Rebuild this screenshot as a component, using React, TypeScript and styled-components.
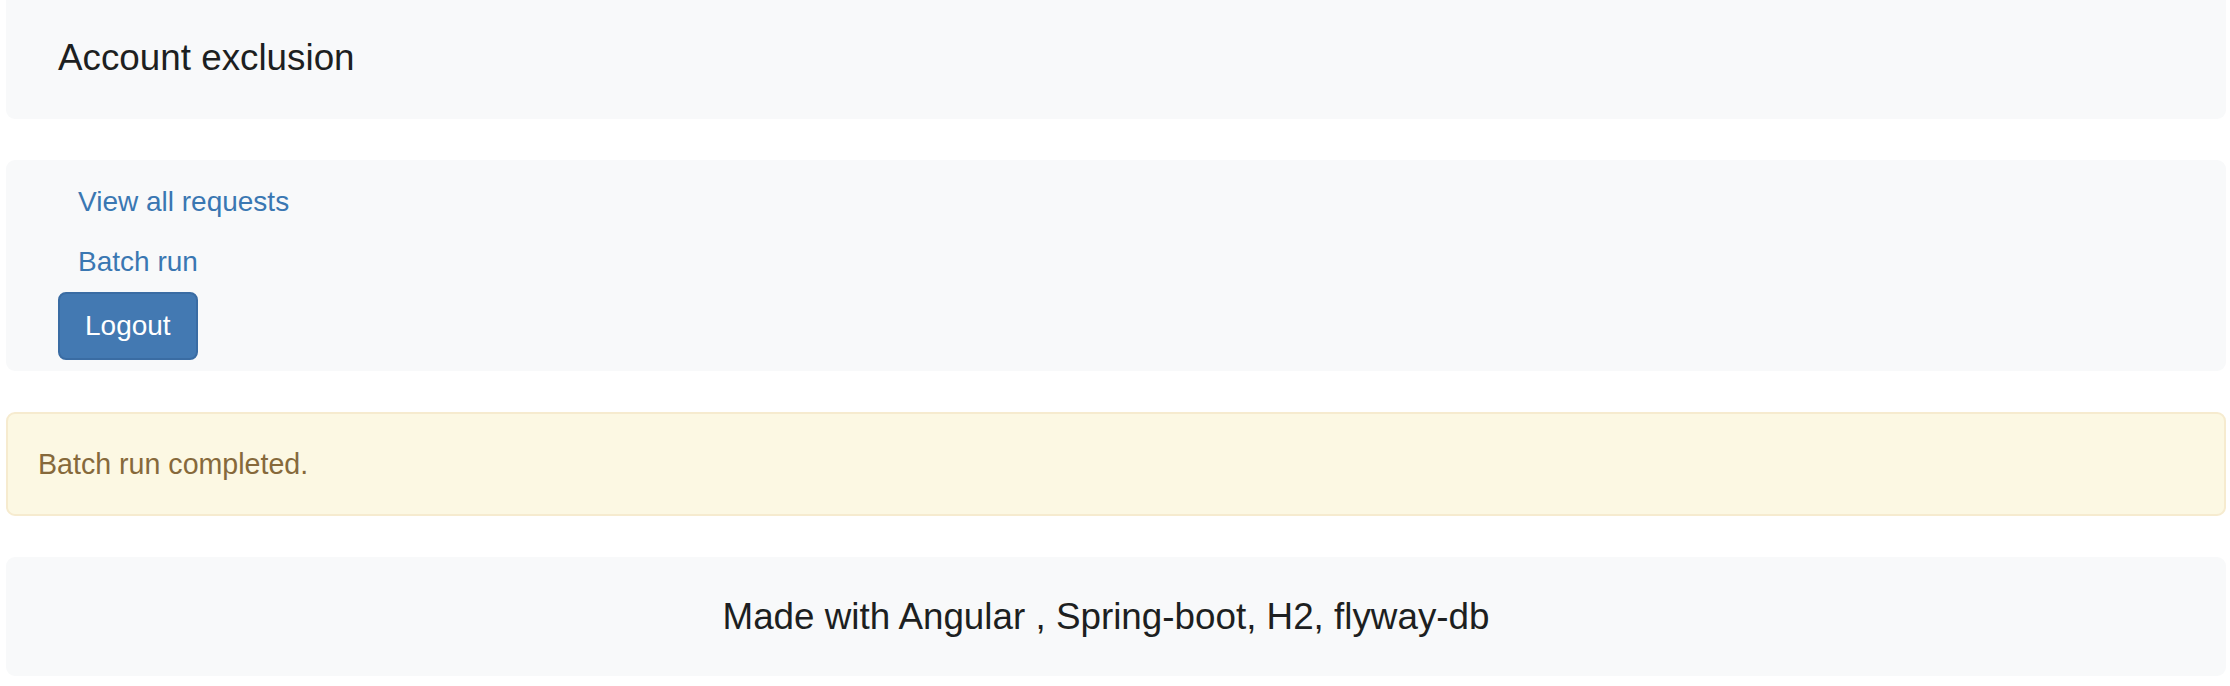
import styled, { createGlobalStyle } from 'styled-components';

const GlobalStyle = createGlobalStyle`
  html, body {
    margin: 0;
    padding: 0;
    background: #ffffff;
  }
  body {
    font-family: "Liberation Sans", Arial, Helvetica, sans-serif;
    color: #212529;
    -webkit-font-smoothing: antialiased;
  }
`;

const Page = styled.div`
  display: flex;
  flex-direction: column;
  gap: 41px;
  padding: 0 4px 11px 6px;
`;

const Panel = styled.div<{ $flatTop?: boolean; $center?: boolean }>`
  background: #f8f9fa;
  border-radius: ${({ $flatTop }) => ($flatTop ? '0 0 9px 9px' : '9px')};
  padding: ${({ $flatTop }) => ($flatTop ? '38px 52px 41px' : '40px 52px 39px')};
  text-align: ${({ $center }) => ($center ? 'center' : 'left')};
`;

const Title = styled.h4`
  margin: 0;
  font-size: 36.8px;
  font-weight: 400;
  line-height: 40px;
  color: #1d1f21;
`;

const NavPanel = styled.div`
  background: #f8f9fa;
  border-radius: 9px;
  padding: 12px 52px 11px;
  display: flex;
  flex-direction: column;
  align-items: flex-start;
`;

const NavLink = styled.a`
  display: block;
  padding: 10px 20px;
  font-size: 28px;
  line-height: 40px;
  color: #3a77b2;
  text-decoration: none;
  cursor: pointer;
`;

const LogoutButton = styled.button`
  font-family: "Liberation Sans", Arial, Helvetica, sans-serif;
  font-size: 28px;
  line-height: 40px;
  padding: 12px 25px;
  color: #ffffff;
  background: #4379b2;
  border: 2px solid #3a6ca3;
  border-radius: 8px;
  cursor: pointer;
`;

const Alert = styled.div`
  background: #fcf8e3;
  border: 2px solid #f6ebcf;
  border-radius: 9px;
  padding: 30px;
  font-size: 28.6px;
  line-height: 40px;
  color: #86693b;
`;

const FooterText = styled.h4`
  margin: 0;
  padding-right: 20px;
  font-size: 36.8px;
  font-weight: 400;
  line-height: 40px;
  color: #1d1f21;
`;

export default function App() {
  return (
    <>
      <GlobalStyle />
      <Page>
        <Panel $flatTop>
          <Title>Account exclusion</Title>
        </Panel>

        <NavPanel>
          <NavLink>View all requests</NavLink>
          <NavLink>Batch run</NavLink>
          <LogoutButton>Logout</LogoutButton>
        </NavPanel>

        <Alert>Batch run completed.</Alert>

        <Panel $center>
          <FooterText>Made with Angular , Spring-boot, H2, flyway-db</FooterText>
        </Panel>
      </Page>
    </>
  );
}
